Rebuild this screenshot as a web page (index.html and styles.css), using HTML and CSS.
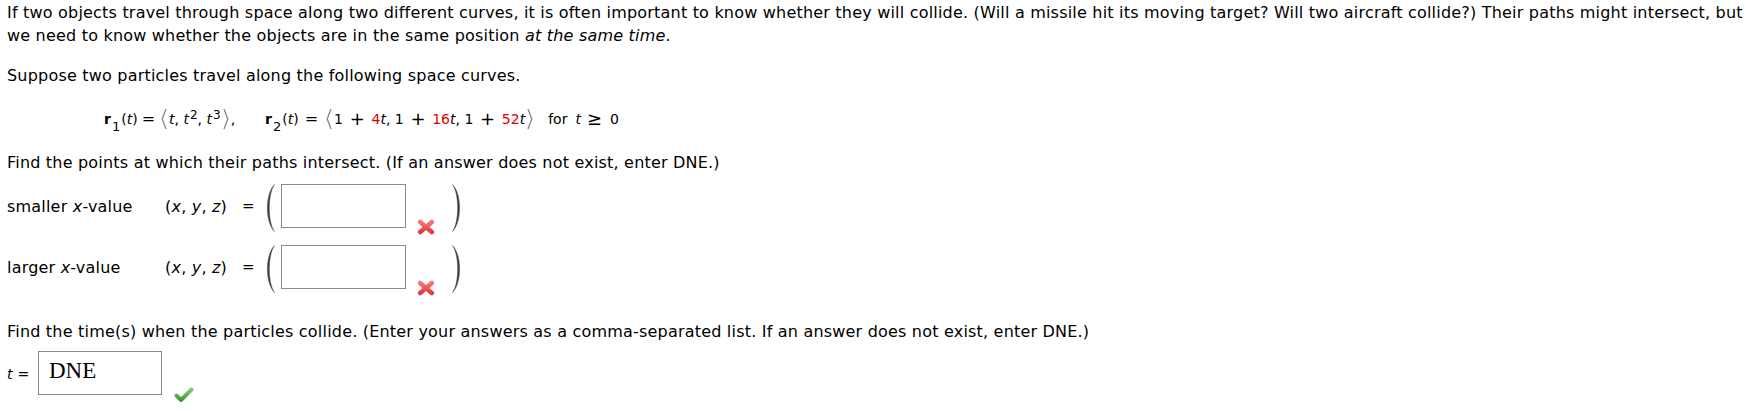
FILE: index.html
```html
<!DOCTYPE html>
<html lang="en">
<head>
<meta charset="utf-8">
<title>Space curves</title>
<link rel="stylesheet" href="styles.css">
</head>
<body>
<div class="question">
  <p class="para first">If two objects travel through space along two different curves, it is often important to know whether they will collide. (Will a missile hit its moving target? Will two aircraft collide?) Their paths might intersect, but we need to know whether the objects are in the same position <i>at the same time</i>.</p>
  <p class="para">Suppose two particles travel along the following space curves.</p>
  <div class="eq">
    <b class="vec">r</b><sub class="sub">1</sub>(<i>t</i>)<span class="op">=</span><svg class="ang" viewBox="0 0 6 22" width="6" height="22"><polyline points="5,1 1.2,11 5,21" fill="none" stroke="#8c8c8c" stroke-width="1.4"/></svg><i>t</i>, <i>t</i><sup class="sup">2</sup>, <i>t</i><sup class="sup">3</sup><svg class="ang" viewBox="0 0 6 22" width="6" height="22"><polyline points="1,1 4.8,11 1,21" fill="none" stroke="#8c8c8c" stroke-width="1.4"/></svg>,<span class="gap"></span><b class="vec">r</b><sub class="sub">2</sub>(<i>t</i>)<span class="op wide">=</span><svg class="ang" viewBox="0 0 6 22" width="6" height="22"><polyline points="5,1 1.2,11 5,21" fill="none" stroke="#8c8c8c" stroke-width="1.4"/></svg>1<span class="op plus">+</span><span class="red">4</span><i>t</i>, 1<span class="op plus">+</span><span class="red">16</span><i>t</i>, 1<span class="op plus">+</span><span class="red">52</span><i>t</i><svg class="ang" viewBox="0 0 6 22" width="6" height="22"><polyline points="1,1 4.8,11 1,21" fill="none" stroke="#8c8c8c" stroke-width="1.4"/></svg><span class="cond"><span class="for">for</span><i>t</i><span class="geq">≥</span>0</span>
  </div>
  <p class="para">Find the points at which their paths intersect. (If an answer does not exist, enter DNE.)</p>
  <div class="rows">
    <div class="row">
      <span class="lbl">smaller <i>x</i>-value</span>
      <span class="xyz">(<i>x</i>, <i>y</i>, <i>z</i>)</span>
      <span class="eqsign">=</span>
      <svg class="bigparen" viewBox="0 0 12 48" width="12" height="48"><path d="M11.5 0.5 C2 10 2 38 11.5 47.5 C4.6 38 4.6 10 11.5 0.5 Z" fill="#3c3c3c" stroke="#3c3c3c" stroke-width="0.4"/></svg>
      <span class="box"></span>
      <svg class="mark" viewBox="0 0 18 16" width="18" height="16"><defs><linearGradient id="rg1" x1="0" y1="0" x2="0" y2="1"><stop offset="0" stop-color="#f67777"/><stop offset="1" stop-color="#e23b3b"/></linearGradient></defs><path d="M3.2 3 L14.8 13 M14.8 3 L3.2 13" stroke="url(#rg1)" stroke-width="4.6" stroke-linecap="round"/></svg>
      <svg class="bigparen right" viewBox="0 0 12 48" width="12" height="48"><path d="M0.5 0.5 C10 10 10 38 0.5 47.5 C7.4 38 7.4 10 0.5 0.5 Z" fill="#3c3c3c" stroke="#3c3c3c" stroke-width="0.4"/></svg>
    </div>
    <div class="row">
      <span class="lbl">larger <i>x</i>-value</span>
      <span class="xyz">(<i>x</i>, <i>y</i>, <i>z</i>)</span>
      <span class="eqsign">=</span>
      <svg class="bigparen" viewBox="0 0 12 48" width="12" height="48"><path d="M11.5 0.5 C2 10 2 38 11.5 47.5 C4.6 38 4.6 10 11.5 0.5 Z" fill="#3c3c3c" stroke="#3c3c3c" stroke-width="0.4"/></svg>
      <span class="box"></span>
      <svg class="mark" viewBox="0 0 18 16" width="18" height="16"><defs><linearGradient id="rg2" x1="0" y1="0" x2="0" y2="1"><stop offset="0" stop-color="#f67777"/><stop offset="1" stop-color="#e23b3b"/></linearGradient></defs><path d="M3.2 3 L14.8 13 M14.8 3 L3.2 13" stroke="url(#rg2)" stroke-width="4.6" stroke-linecap="round"/></svg>
      <svg class="bigparen right" viewBox="0 0 12 48" width="12" height="48"><path d="M0.5 0.5 C10 10 10 38 0.5 47.5 C7.4 38 7.4 10 0.5 0.5 Z" fill="#3c3c3c" stroke="#3c3c3c" stroke-width="0.4"/></svg>
    </div>
  </div>
  <p class="para tpara">Find the time(s) when the particles collide. (Enter your answers as a comma-separated list. If an answer does not exist, enter DNE.)</p>
  <div class="trow">
    <span class="tlbl"><i>t</i><span class="teq">=</span></span>
    <span class="box tbox">DNE</span>
    <svg class="check" viewBox="0 0 20 16" width="20" height="16"><defs><linearGradient id="gg" x1="0" y1="0" x2="0" y2="1"><stop offset="0" stop-color="#7ccb6f"/><stop offset="1" stop-color="#3f9a3c"/></linearGradient></defs><path d="M2.5 8.5 L7 13 L17.5 2.5" fill="none" stroke="url(#gg)" stroke-width="4" stroke-linecap="round" stroke-linejoin="round"/></svg>
  </div>
</div>
</body>
</html>
```

FILE: styles.css
```css
html, body {
  margin: 0;
  padding: 0;
  background: #ffffff;
}

body {
  font-family: "DejaVu Sans", Verdana, sans-serif;
  font-size: 16px;
  line-height: 23.4px;
  letter-spacing: 0.2px;
  color: #000;
}

.question {
  padding: 1px 0 0 7px;
}

.para {
  margin: 16px 0 0 0;
}

.para.first {
  margin-top: 0;
}

.para.tpara {
  margin-top: 14px;
}

/* equation line */
.eq {
  margin: 16px 0 14px 97px;
  font-size: 14px;
  line-height: 32px;
  height: 32px;
  white-space: nowrap;
  letter-spacing: 0;
}

.vec {
  font-weight: bold;
}

.sub {
  font-size: 13px;
  line-height: 0;
  vertical-align: -7px;
  margin-left: 1px;
  margin-right: 1px;
}

.sup {
  font-size: 12px;
  line-height: 0;
  vertical-align: 5px;
  margin-left: 1px;
}

.op {
  font-size: 16px;
  margin: 0 4px;
}

.op.wide {
  margin: 0 6px;
}

.op.plus {
  font-size: 18px;
  margin: 0 6.7px;
  vertical-align: -1px;
}

.ang {
  vertical-align: -6px;
  margin: 0 2px;
}

.red {
  color: #e00000;
}

.gap {
  display: inline-block;
  width: 30px;
}

.cond {
  margin-left: 13px;
}

.for {
  margin-right: 8px;
}

.geq {
  font-size: 18px;
  margin: 0 8px 0 6px;
  vertical-align: -1px;
}

/* answer rows */
.rows {
  margin-top: 9px;
  display: flex;
  flex-direction: column;
}

.row {
  display: flex;
  align-items: flex-start;
  height: 61px;
}

.lbl {
  width: 158px;
  margin-top: 11px;
  flex: none;
}

.xyz {
  width: 76px;
  margin-top: 11px;
  flex: none;
}

.eqsign {
  width: 21px;
  margin-top: 11px;
  padding-left: 1px;
  flex: none;
  font-size: 15px;
}

.bigparen {
  flex: none;
  display: block;
}

.box {
  flex: none;
  display: block;
  box-sizing: border-box;
  width: 125px;
  height: 44px;
  margin-left: 6px;
  border: 1px solid #8a8a8a;
  background: #fff;
}

.mark {
  flex: none;
  display: block;
  margin-left: 11px;
  margin-top: 35px;
}

.bigparen.right {
  margin-left: 17px;
}

/* time row */
.trow {
  margin-top: 8px;
  display: flex;
  align-items: flex-start;
}

.tlbl {
  width: 31px;
  margin-top: 12px;
  font-size: 14px;
  letter-spacing: 0;
  flex: none;
}

.teq {
  margin-left: 5px;
}

.tbox {
  margin-left: 0;
  width: 124px;
  height: 44px;
  font-family: "Liberation Serif", "Times New Roman", serif;
  font-size: 23px;
  line-height: 38px;
  padding-left: 10px;
  letter-spacing: 0;
}

.check {
  flex: none;
  display: block;
  margin-left: 12px;
  margin-top: 36px;
}
```
